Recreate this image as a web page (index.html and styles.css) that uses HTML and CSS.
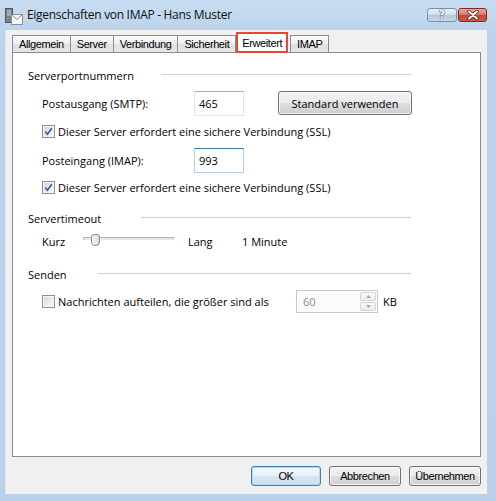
FILE: index.html
```html
<!DOCTYPE html>
<html lang="de">
<head>
<meta charset="utf-8">
<title>Eigenschaften von IMAP - Hans Muster</title>
<link rel="stylesheet" href="styles.css">
</head>
<body>
<div class="window">
  <div class="titlebar">
    <svg class="app-icon" width="18" height="18" viewBox="0 0 18 18" aria-hidden="true">
      <rect x="0.5" y="0.5" width="7" height="14" fill="#7d838a" stroke="#4f555c"/>
      <line x1="2" y1="3" x2="6" y2="3" stroke="#c9ced3"/>
      <line x1="2" y1="5" x2="6" y2="5" stroke="#c9ced3"/>
      <line x1="2" y1="7" x2="6" y2="7" stroke="#c9ced3"/>
      <rect x="6.5" y="6.5" width="11" height="10" fill="#f7f7f7" stroke="#8a8f95"/>
      <path d="M6.5 6.5 L12 11.5 L17.5 6.5" fill="none" stroke="#8a8f95"/>
    </svg>
    <span class="title">Eigenschaften von IMAP - Hans Muster</span>
    <div class="caption-buttons">
      <div class="cap-btn cap-help">?</div>
      <div class="cap-btn cap-close">
        <svg width="12" height="10" viewBox="0 0 12 10" aria-hidden="true">
          <path d="M2 1.5 L10 8.5 M10 1.5 L2 8.5" stroke="#5a1d16" stroke-width="3.6" stroke-linecap="round"/>
          <path d="M2 1.5 L10 8.5 M10 1.5 L2 8.5" stroke="#ffffff" stroke-width="2" stroke-linecap="round"/>
        </svg>
      </div>
    </div>
  </div>
  <div class="client">
    <div class="tabs">
      <div class="tab">Allgemein</div>
      <div class="tab">Server</div>
      <div class="tab">Verbindung</div>
      <div class="tab">Sicherheit</div>
      <div class="tab tab-selected">Erweitert</div>
      <div class="tab">IMAP</div>
    </div>
    <div class="panel">
      <div class="content">
        <div class="group-head">
          <span class="group-title title-ports">Serverportnummern</span>
          <span class="group-rule"></span>
        </div>
        <div class="field-row row-smtp">
          <span class="field-label">Postausgang (SMTP):</span>
          <span class="text-input">465</span>
          <span class="btn btn-std">Standard verwenden</span>
        </div>
        <div class="check-row row-ssl1">
          <span class="checkbox checked">
            <svg width="11" height="11" viewBox="0 0 11 11" aria-hidden="true"><path d="M2.2 5.6 L4.4 8.2 L8.8 2.2" fill="none" stroke="#3b5a93" stroke-width="1.6"/></svg>
          </span>
          <span class="check-text">Dieser Server erfordert eine sichere Verbindung (SSL)</span>
        </div>
        <div class="field-row row-imap">
          <span class="field-label">Posteingang (IMAP):</span>
          <span class="text-input focused">993</span>
        </div>
        <div class="check-row row-ssl2">
          <span class="checkbox checked">
            <svg width="11" height="11" viewBox="0 0 11 11" aria-hidden="true"><path d="M2.2 5.6 L4.4 8.2 L8.8 2.2" fill="none" stroke="#3b5a93" stroke-width="1.6"/></svg>
          </span>
          <span class="check-text">Dieser Server erfordert eine sichere Verbindung (SSL)</span>
        </div>
        <div class="group-head head-timeout">
          <span class="group-title title-timeout">Servertimeout</span>
          <span class="group-rule"></span>
        </div>
        <div class="slider-row">
          <span class="slider-min">Kurz</span>
          <span class="slider">
            <span class="slider-track"></span>
            <span class="slider-thumb"></span>
          </span>
          <span class="slider-max">Lang</span>
          <span class="slider-value">1 Minute</span>
        </div>
        <div class="group-head head-send">
          <span class="group-title title-send">Senden</span>
          <span class="group-rule"></span>
        </div>
        <div class="check-row row-split">
          <span class="checkbox"></span>
          <span class="check-text split-text">Nachrichten aufteilen, die größer sind als</span>
          <span class="spinner">
            <span class="spinner-value">60</span>
            <span class="spinner-buttons">
              <span class="spin-btn"><svg width="5" height="3" viewBox="0 0 5 3" aria-hidden="true"><path d="M0 3 L2.5 0 L5 3 Z" fill="#a7a7a7"/></svg></span>
              <span class="spin-btn"><svg width="5" height="3" viewBox="0 0 5 3" aria-hidden="true"><path d="M0 0 L2.5 3 L5 0 Z" fill="#a7a7a7"/></svg></span>
            </span>
          </span>
          <span class="unit">KB</span>
        </div>
      </div>
    </div>
    <div class="footer">
      <span class="btn btn-dlg btn-default">OK</span>
      <span class="btn btn-dlg">Abbrechen</span>
      <span class="btn btn-dlg">Übernehmen</span>
    </div>
  </div>
</div>
</body>
</html>
```
FILE: styles.css
```css
* { box-sizing: border-box; }
html, body { margin: 0; padding: 0; }
body {
  width: 496px;
  height: 501px;
  overflow: hidden;
  background: #bcd3ec;
  font-family: "Open Sans", "Noto Sans", sans-serif;
  font-size: 11px;
  color: #000;
}
.window {
  width: 496px;
  height: 501px;
  padding: 0 9px 7px 5px;
  background: linear-gradient(#c8ddf2 0, #bcd3ec 30px, #b9d1ea 100%);
  display: flex;
  flex-direction: column;
}
.titlebar {
  height: 30px;
  flex: none;
  display: flex;
  align-items: flex-start;
}
.app-icon { margin-top: 8px; flex: none; }
.title {
  margin-left: 4px;
  margin-top: 8px;
  font-size: 12px;
  line-height: 14px;
  letter-spacing: -0.3px;
  color: #111;
}
.caption-buttons {
  margin-left: auto;
  margin-top: 8px;
  display: flex;
  gap: 1px;
}
.cap-btn {
  height: 14px;
  border-radius: 3px;
  display: flex;
  align-items: center;
  justify-content: center;
}
.cap-help {
  width: 30px;
  border: 1px solid #7f8ea3;
  background: linear-gradient(#e8eff7 0, #d3e0ee 45%, #b5c8de 50%, #c6d7ea 100%);
  color: #fff;
  font-family: "DejaVu Sans", sans-serif;
  font-weight: bold;
  font-size: 11px;
  line-height: 12px;
  text-shadow: 0 0 1px #3c4a5c, 0 0 1px #3c4a5c, 0 0 1px #3c4a5c;
}
.cap-close {
  width: 29px;
  border: 1px solid #7a2a20;
  background: linear-gradient(#e9a99b 0, #d7806e 45%, #c44a35 50%, #c9584a 100%);
}
.client {
  flex: 1;
  background: #f0f0f0;
  padding: 2px 6px 0 6px;
  display: flex;
  flex-direction: column;
  border-left: 1px solid #dde6ef;
}
.tabs {
  height: 20px;
  display: flex;
  align-items: flex-end;
  padding-left: 0;
  position: relative;
  z-index: 1;
  font-family: "Liberation Sans", Arial, sans-serif;
  font-size: 11px;
  letter-spacing: -0.4px;
}
.tab {
  height: 17px;
  padding: 0 6px;
  margin-right: -1px;
  border: 1px solid #898c95;
  border-bottom: none;
  background: linear-gradient(#fbfbfb 0, #eeeeee 50%, #e1e1e1 51%, #e6e6e6 100%);
  display: flex;
  align-items: center;
  color: #000;
}
.tab-selected {
  height: 21px;
  margin: 0 2px -1px 1px;
  padding: 0 4px;
  border: 2px solid #e5492f;
  background: #fff;
}
.panel {
  height: 405px;
  flex: none;
  background: #fff;
  border: 1px solid #898c95;
}
.content {
  width: 398px;
  padding: 14px 0 0 15px;
}
.group-head {
  height: 16px;
  display: flex;
  align-items: center;
}
.group-title { flex: none; }
.title-ports { width: 133px; }
.title-timeout { width: 113px; }
.title-send { width: 70px; }
.group-rule {
  flex: 1;
  height: 0;
  border-top: 1px solid #d2d2d2;
  margin-top: -1px;
}
.head-timeout { margin-top: 15px; }
.head-send { margin-top: 17px; }
.field-row {
  height: 25px;
  display: flex;
  align-items: center;
  padding-left: 14px;
}
.row-smtp { margin-top: 8px; }
.row-imap { margin-top: 9px; }
.field-label { width: 152px; flex: none; }
.text-input {
  width: 50px;
  height: 25px;
  flex: none;
  border: 1px solid #e2e3ea;
  border-top-color: #abadb3;
  background: #fff;
  padding-left: 4px;
  display: flex;
  align-items: center;
}
.text-input.focused {
  border-color: #b5cfe7;
  border-top-color: #3d7bad;
}
.btn {
  border: 1px solid #707070;
  border-radius: 3px;
  background: linear-gradient(#f2f2f2 0, #ebebeb 50%, #dddddd 51%, #cfcfcf 100%);
  box-shadow: inset 0 0 0 1px rgba(255, 255, 255, 0.75);
  display: flex;
  align-items: center;
  justify-content: center;
  flex: none;
}
.btn-std {
  width: 134px;
  height: 24px;
  margin-left: 34px;
  margin-top: -1px;
}
.check-row {
  height: 16px;
  display: flex;
  align-items: center;
  padding-left: 14px;
}
.row-ssl1 { margin-top: 7px; }
.row-ssl2 { margin-top: 6px; }
.checkbox {
  width: 13px;
  height: 13px;
  flex: none;
  border: 1px solid #8e8f8f;
  background: linear-gradient(135deg, #d6d6d6 0, #eeeeee 60%, #fbfbfb 100%);
  box-shadow: inset 0 0 0 1px #f4f4f4;
  display: flex;
  align-items: center;
  justify-content: center;
  margin-right: 3px;
}
.checkbox.checked {
  background: linear-gradient(135deg, #cfd6df 0, #e9edf2 60%, #f9fafb 100%);
}
.check-text { white-space: nowrap; }
.slider-row {
  height: 16px;
  margin-top: 7px;
  display: flex;
  align-items: center;
  padding-left: 14px;
}
.slider-min { width: 41px; flex: none; }
.slider {
  width: 91px;
  height: 16px;
  flex: none;
  position: relative;
}
.slider-track {
  position: absolute;
  left: 0;
  right: 0;
  top: 4px;
  height: 3px;
  border: 1px solid #b4b4b4;
  border-bottom-color: #e4e4e4;
  background: #e9e9e9;
}
.slider-thumb {
  position: absolute;
  left: 8px;
  top: 1px;
  width: 9px;
  height: 12px;
  border: 1px solid #8a8a8a;
  border-radius: 3px 3px 4px 4px;
  background: linear-gradient(90deg, #f4f4f4, #dcdcdc);
}
.slider-max { width: 54px; flex: none; margin-left: 14px; }
.slider-value { flex: none; }
.row-split {
  height: 24px;
  margin-top: 7px;
}
.split-text { width: 238px; flex: none; }
.spinner {
  width: 82px;
  height: 23px;
  flex: none;
  border: 1px solid #c5c9cd;
  background: #fbfbfb;
  display: flex;
  align-items: center;
  padding-left: 6px;
  color: #8b8b8b;
}
.spinner-value { flex: 1; }
.spinner-buttons {
  width: 16px;
  height: 21px;
  display: flex;
  flex-direction: column;
  gap: 1px;
  margin-right: 1px;
  padding: 1px 0;
}
.spin-btn {
  flex: 1;
  border: 1px solid #d5d5d5;
  border-radius: 2px;
  background: linear-gradient(#fafafa, #ececec);
  display: flex;
  align-items: center;
  justify-content: center;
}
.unit { margin-left: 5px; }
.footer {
  margin-top: 9px;
  display: flex;
  justify-content: flex-end;
  gap: 8px;
  font-family: "Liberation Sans", Arial, sans-serif;
  font-size: 11px;
  letter-spacing: -0.4px;
}
.btn-dlg {
  width: 72px;
  height: 20px;
}
.btn-default {
  width: 70px;
  border-color: #3c7fb1;
  box-shadow: inset 0 0 0 1px #a6dcf6;
  background: linear-gradient(#f2f8fc 0, #e6f1f8 50%, #d6e6f0 51%, #cfe1ee 100%);
}
```
